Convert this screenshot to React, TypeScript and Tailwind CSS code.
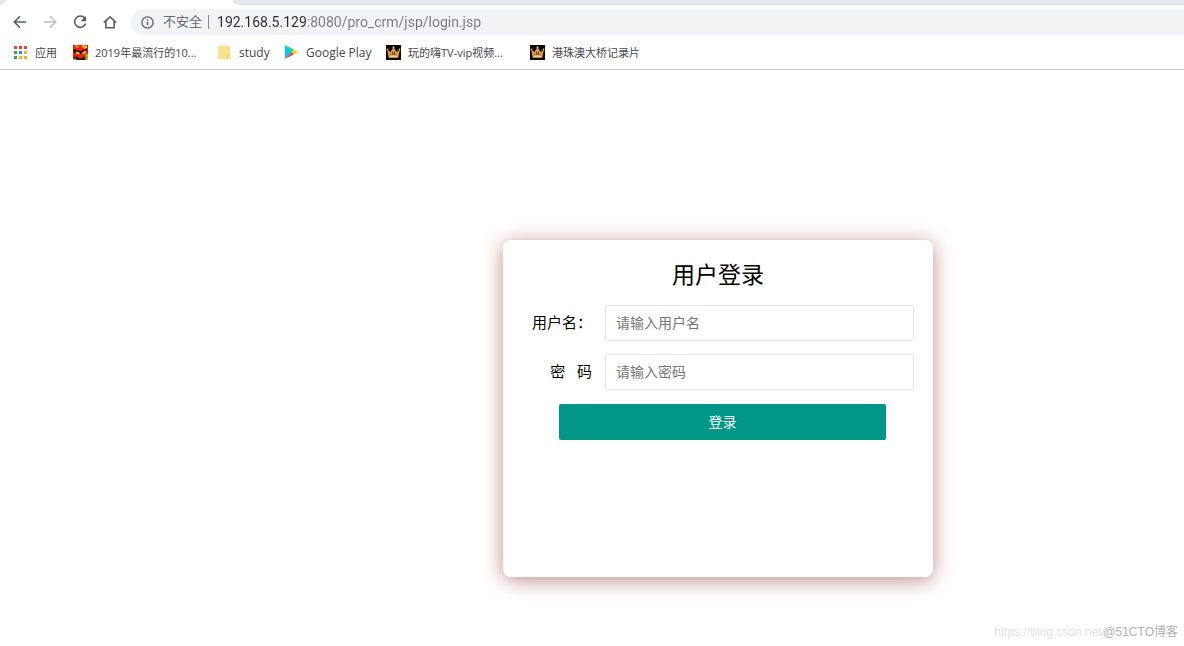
import React from 'react';

interface Bookmark {
  label: string;
  icon: React.ReactNode;
  className: string;
}

const AppsIcon = () => (
  <svg className="w-[13px] h-[13px] shrink-0" viewBox="0 0 13 13">
    <path fill="#ea4335" d="M0 0h3v3H0zM5 0h3v3H5zM10 0h3v3h-3z" />
    <path fill="#34a853" d="M0 5h3v3H0zM0 10h3v3H0z" />
    <path fill="#2f86f6" d="M5 5h3v3H5z" />
    <path fill="#fbae17" d="M10 5h3v3h-3zM5 10h3v3H5zM10 10h3v3h-3z" />
  </svg>
);

const MaskIcon = () => (
  <svg className="w-[15px] h-[15px] shrink-0" viewBox="0 0 15 15">
    <path fill="#f01c0c" d="M0 0h15v15H0z" />
    <path fill="#fb8c1a" d="M2 0h3l1 2-3 1zM9 0h4l-2 3-3-1z" />
    <path fill="#f9d51f" d="M11 1h3v2l-3 1z" />
    <path fill="#3a0d06" d="M0 4l4 1 3 1 4-1 3-2v3l-4 3H5L0 7z" />
    <path fill="#fbe02a" d="M3 6.500l4 1.500-1 1.500-3-1zM12.500 5.500L9 8l1 1.500 3-2z" />
    <path fill="#e8220c" d="M4 9.500h7l1 2-4 2-4-1z" />
    <path fill="#2a1408" d="M0 12l3-.5 5 2 4-2v3.500H0z" />
    <path fill="#8fc31f" d="M12.500 9H15v6h-2.500zM0 13.500h3V15H0z" />
  </svg>
);

const FolderIcon = () => (
  <svg className="w-[13px] h-[15px] shrink-0" viewBox="0 0 13 15">
    <path fill="#fde293" d="M1 .5h10a1 1 0 0 1 1 1V9l.7 1v3.200a1 1 0 0 1-1 1H1a1 1 0 0 1-1-1V1.500a1 1 0 0 1 1-1z" />
    <path fill="none" stroke="#eccb62" strokeWidth=".8" d="M12 9.500h-2.500v3.200l-1 1.300" />
  </svg>
);

const PlayIcon = () => (
  <svg className="w-[13px] h-[14px] shrink-0" viewBox="0 0 13 14">
    <path fill="#00c3ff" d="M0 0v14l7-7z" />
    <path fill="#00e676" d="M0 0l9 4.700L6.700 7z" />
    <path fill="#f5394b" d="M0 14l9-4.700L6.700 7z" />
    <path fill="#ffce00" d="M9 4.700L13 7 9 9.300 6.700 7z" />
  </svg>
);

const CrownIcon = () => (
  <svg className="w-[15px] h-[15px] shrink-0" viewBox="0 0 15 15">
    <path fill="#0b0908" d="M0 0h15v15H0z" />
    <path fill="#d79a4e" d="M1 4.500l3.400 2.600L7.500 2l3.100 5.100L14 4.500l-1.800 8.300H2.800z" />
    <path fill="#f3c98a" d="M3 10.800h9l-.4 1.500H3.400z" />
    <path fill="#5c3714" d="M6.500 6l1 3 1-3 .6 3.500H5.900zM4.500 8.500l.8 1.500h-1zM10.500 8.500l-.8 1.500h1z" />
    <circle cx="1.500" cy="4.300" r=".9" fill="#e8b873" />
    <circle cx="7.500" cy="2.200" r="1" fill="#e8b873" />
    <circle cx="13.500" cy="4.300" r=".9" fill="#e8b873" />
  </svg>
);

const BOOKMARKS: Bookmark[] = [
  { label: '应用', icon: <AppsIcon />, className: 'w-[59px] gap-2 text-[11px]' },
  { label: '2019年最流行的10...', icon: <MaskIcon />, className: 'w-[145px] gap-[7px] text-[11px]' },
  { label: 'study', icon: <FolderIcon />, className: 'w-[67px] gap-2 text-[12px]' },
  { label: 'Google Play', icon: <PlayIcon />, className: 'w-[101px] gap-2 text-[12px]' },
  { label: '玩的嗨TV-vip视频...', icon: <CrownIcon />, className: 'w-[144px] gap-[7px] text-[11px]' },
  { label: '港珠澳大桥记录片', icon: <CrownIcon />, className: 'gap-[7px] text-[11px]' },
];

const NavButton = ({ label, children, muted }: { label: string; children: React.ReactNode; muted?: boolean }) => (
  <button
    type="button"
    aria-label={label}
    className={`w-[30px] h-[26px] flex items-center justify-center ${muted ? 'text-[#bcbec1]' : 'text-[#5a5d61]'}`}
  >
    <svg className="w-4 h-4" viewBox="0 0 16 16" fill="none" stroke="currentColor" strokeWidth="1.600">
      {children}
    </svg>
  </button>
);

const BrowserBar = () => (
  <header className="border-b border-[#c8c9ca] bg-white">
    {/* Tab strip */}
    <div className="flex h-[5px] bg-[#e4e7ea]">
      <div className="ml-[2px] w-[236px] bg-white [clip-path:polygon(0_100%,5px_0,230px_0,232px_60%,100%_100%)]" />
    </div>

    {/* Toolbar */}
    <div className="flex items-center pt-1 pl-[5px]">
      <NavButton label="后退">
        <path d="M14.200 8H2.500M8 2.300L2.300 8 8 13.700" />
      </NavButton>
      <NavButton label="前进" muted>
        <path d="M1.800 8h11.700M8 2.300L13.700 8 8 13.700" />
      </NavButton>
      <NavButton label="刷新">
        <path d="M12.600 4.100A5.600 5.600 0 1 0 13.500 9.600" />
        <path d="M14 1.800v5.400H8.600z" fill="currentColor" stroke="none" />
      </NavButton>
      <NavButton label="主页">
        <path d="M1.800 8.600L8 2.800l6.200 5.800M3.900 7.500v6.200h8.200V7.500" />
      </NavButton>
      <div className="ml-[6px] h-[26px] flex-1 flex items-center rounded-l-full bg-[#f1f3f4] pl-[10px] text-[13px]">
        <svg className="w-[13px] h-[13px] shrink-0" viewBox="0 0 13 13" fill="none" stroke="#5f6368">
          <circle cx="6.500" cy="6.500" r="5.600" strokeWidth="1.300" />
          <path d="M6.500 5.800v3.700M6.500 3.300v1.400" strokeWidth="1.400" />
        </svg>
        <span className="ml-[9px] text-[#6a6e72]">不安全</span>
        <span className="mx-[6px] h-[14px] w-px bg-[#85888c]" />
        <input
          type="text"
          aria-label="地址"
          defaultValue="192.168.5.129:8080/pro_crm/jsp/login.jsp"
          className="ml-[2px] flex-1 min-w-0 outline-none text-[14px] font-['Roboto',sans-serif] bg-linear-to-r from-[#2b2c2f] from-[90px] to-[#777b80] to-[90px] bg-clip-text text-transparent"
        />
      </div>
    </div>

    {/* Bookmarks */}
    <nav className="flex items-center h-[34px] pl-[14px] text-[#444648]">
      {BOOKMARKS.map((item) => (
        <a key={item.label} href="#" className={`flex items-center whitespace-nowrap ${item.className}`}>
          {item.icon}
          <span className="pt-[2px]">{item.label}</span>
        </a>
      ))}
    </nav>
  </header>
);

const inputClass =
  'flex-1 min-w-0 h-9 px-[10px] pb-[2px] border border-[#e6e6e6] rounded-[2px] bg-white text-[14px] outline-none placeholder:text-[#757575]';
const labelClass = 'w-[102px] shrink-0 pr-[13px] pb-[2px] text-right text-[15px] whitespace-pre';

const LoginForm = () => (
  <form
    onSubmit={(e) => e.preventDefault()}
    className="w-[430px] min-h-[337px] mt-[170px] ml-[503px] pt-[14px] pr-[19px] rounded-[8px] bg-white text-black shadow-[0_3px_20px_rgba(128,24,24,0.5)]"
  >
    <h1 className="ml-[19px] text-[23px] leading-[40px] text-center">用户登录</h1>
    <div className="mt-[11px] flex items-center">
      <label htmlFor="username" className={labelClass}>用户名：</label>
      <input id="username" type="text" placeholder="请输入用户名" className={inputClass} />
    </div>
    <div className="mt-[13px] flex items-center">
      <label htmlFor="password" className={labelClass}>{'密\u00a0\u00a0\u00a0码'}</label>
      <input id="password" type="password" placeholder="请输入密码" className={inputClass} />
    </div>
    <button
      type="submit"
      className="mt-[14px] ml-14 w-[327px] h-9 pb-[2px] rounded-[2px] bg-[#009688] text-white text-[14px]"
    >
      登录
    </button>
  </form>
);

export default function App() {
  return (
    <div className="relative min-h-screen bg-white font-['Open_Sans','Noto_Sans_CJK_SC',sans-serif]">
      <BrowserBar />
      <main>
        <LoginForm />
      </main>

      {/* Watermarks */}
      <span className="absolute bottom-[5px] right-[79px] text-[12px] leading-[18px] text-[#e2e2e2] font-['Liberation_Sans','Noto_Sans_CJK_SC',sans-serif]">
        https://blog.csdn.net/
      </span>
      <span className="absolute bottom-[5px] right-[6px] text-[12px] leading-[18px] text-[#b0b0b0] font-['Liberation_Sans','Noto_Sans_CJK_SC',sans-serif]">
        @51CTO博客
      </span>
    </div>
  );
}
